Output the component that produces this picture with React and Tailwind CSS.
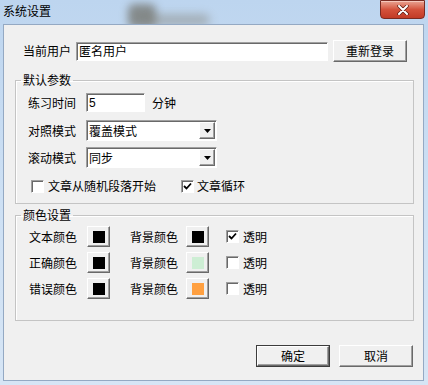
import React from 'react';

const font = { fontFamily: '"Noto Sans CJK SC", "Liberation Sans", sans-serif' };

const Raised = ({ className = '', children }) => (
  <div
    className={`flex items-center justify-center bg-[#f0f0f0] border border-t-white border-l-white border-r-[#696969] border-b-[#696969] shadow-[inset_-1px_-1px_0_#a0a0a0] ${className}`}
  >
    {children}
  </div>
);

const Sunken = ({ className = '', children }) => (
  <div
    className={`flex items-center bg-white border border-t-[#a0a0a0] border-l-[#a0a0a0] border-r-white border-b-white shadow-[inset_1px_1px_0_#696969] ${className}`}
  >
    {children}
  </div>
);

const Check = ({ checked }) => (
  <Sunken className="w-[13px] h-[13px] shrink-0 justify-center">
    {checked && (
      <svg width="9" height="9" viewBox="0 0 9 9">
        <path d="M1 4 L3.5 6.5 L8 1.5" fill="none" stroke="#000" strokeWidth="1.8" />
      </svg>
    )}
  </Sunken>
);

const Select = ({ value }) => (
  <Sunken className="w-[131px] h-[21px] justify-between pl-[2px] pr-[1px]">
    <span className="leading-[16px]">{value}</span>
    <Raised className="w-[16px] h-[17px]">
      <svg width="7" height="4" viewBox="0 0 7 4">
        <path d="M0 0 H7 L3.5 4 Z" fill="#000" />
      </svg>
    </Raised>
  </Sunken>
);

const Swatch = ({ color }) => (
  <Raised className="w-[23px] h-[21px]">
    <div className="w-[12px] h-[12px]" style={{ backgroundColor: color }} />
  </Raised>
);

const colorRows = [
  { label: '文本颜色', fg: '#000000', bg: '#000000', transparent: true },
  { label: '正确颜色', fg: '#000000', bg: '#cdeed4', transparent: false },
  { label: '错误颜色', fg: '#000000', bg: '#ffa040', transparent: false },
];

export default function App() {
  return (
    <div
      className="relative w-[428px] h-[385px] overflow-hidden bg-gradient-to-b from-[#bdd5ef] via-[#cde0f4] to-[#d6e5f5] text-[12px] text-black flex flex-col"
      style={font}
    >
      {/* blurred desktop behind the glass */}
      <div className="absolute left-[128px] top-[4px] w-[28px] h-[24px] rounded-md bg-[#5e5848] opacity-60 blur-[4px]" />
      <div className="absolute left-[150px] top-[14px] w-[60px] h-[12px] rounded-full bg-[#7a7464] opacity-40 blur-[5px]" />

      {/* Title bar */}
      <div className="relative h-[24px] shrink-0 flex items-start justify-between">
        <span className="ml-[3px] mt-[3px] leading-[16px] text-[12px]">系统设置</span>
        <div className="mr-[3px] w-[45px] h-[19px] rounded-b-[4px] border border-[#7a2b22] bg-gradient-to-b from-[#e8a393] via-[#d4523c] to-[#c23b26] shadow-[inset_0_1px_0_#f5c7bb] flex items-center justify-center">
          <svg width="12" height="10" viewBox="0 0 12 10">
            <path d="M2 1 L10 9 M10 1 L2 9" stroke="#5a1a12" strokeWidth="3.4" strokeLinecap="round" />
            <path d="M2 1 L10 9 M10 1 L2 9" stroke="#ffffff" strokeWidth="2" strokeLinecap="round" />
          </svg>
        </div>
      </div>

      {/* Client area */}
      <div className="relative ml-[3px] mr-[4px] mb-[4px] flex-1 bg-[#f0f0f0] border border-[#94a9c3] flex flex-col">
        {/* user row */}
        <div className="flex items-center mt-[15px] pl-[19px] h-[22px]">
          <span className="w-[53px] leading-[16px]">当前用户</span>
          <Sunken className="w-[252px] h-[19px] pl-[2px] bg-[#f0f0f0]">
            <span className="leading-[16px]">匿名用户</span>
          </Sunken>
          <Raised className="ml-[5px] w-[74px] h-[22px]">
            <span className="leading-[16px]">重新登录</span>
          </Raised>
        </div>

        {/* 默认参数 */}
        <fieldset className="mt-[10px] ml-[11px] w-[399px] border border-[#c4c4c4] shadow-[inset_1px_1px_0_#fff] pb-[9px]">
          <legend className="ml-[5px] px-[2px] leading-[16px]">默认参数</legend>
          <div className="flex items-center mt-[5px] pl-[12px] h-[19px]">
            <span className="w-[58px] leading-[16px]">练习时间</span>
            <Sunken className="w-[59px] h-[19px] pl-[2px]">
              <span className="leading-[16px]" style={{ fontFamily: '"Liberation Sans", sans-serif' }}>5</span>
            </Sunken>
            <span className="ml-[7px] leading-[16px]">分钟</span>
          </div>
          <div className="flex items-center mt-[8px] pl-[12px]">
            <span className="w-[58px] leading-[16px]">对照模式</span>
            <Select value="覆盖模式" />
          </div>
          <div className="flex items-center mt-[6px] pl-[12px]">
            <span className="w-[58px] leading-[16px]">滚动模式</span>
            <Select value="同步" />
          </div>
          <div className="flex items-center mt-[10px] pl-[15px] h-[16px]">
            <Check checked={false} />
            <span className="ml-[4px] leading-[16px]">文章从随机段落开始</span>
            <div className="ml-[25px]">
              <Check checked />
            </div>
            <span className="ml-[3px] leading-[16px]">文章循环</span>
          </div>
        </fieldset>

        {/* 颜色设置 */}
        <fieldset className="mt-[3px] ml-[11px] w-[399px] border border-[#c4c4c4] shadow-[inset_1px_1px_0_#fff] pb-[21px]">
          <legend className="ml-[5px] px-[2px] leading-[16px]">颜色设置</legend>
          <div className="flex flex-col gap-[5px] mt-[3px]">
            {colorRows.map((row) => (
              <div key={row.label} className="flex items-center pl-[13px]">
                <span className="w-[58px] leading-[16px]">{row.label}</span>
                <Swatch color={row.fg} />
                <span className="ml-[20px] w-[56px] leading-[16px]">背景颜色</span>
                <Swatch color={row.bg} />
                <div className="ml-[17px]">
                  <Check checked={row.transparent} />
                </div>
                <span className="ml-[4px] leading-[16px]">透明</span>
              </div>
            ))}
          </div>
        </fieldset>

        {/* buttons */}
        <div className="flex justify-end gap-[9px] mt-[24px] pr-[10px]">
          <div className="border border-[#3c3c3c]">
            <Raised className="w-[72px] h-[20px]">
              <span className="leading-[16px]">确定</span>
            </Raised>
          </div>
          <Raised className="w-[74px] h-[22px]">
            <span className="leading-[16px]">取消</span>
          </Raised>
        </div>
      </div>
    </div>
  );
}
